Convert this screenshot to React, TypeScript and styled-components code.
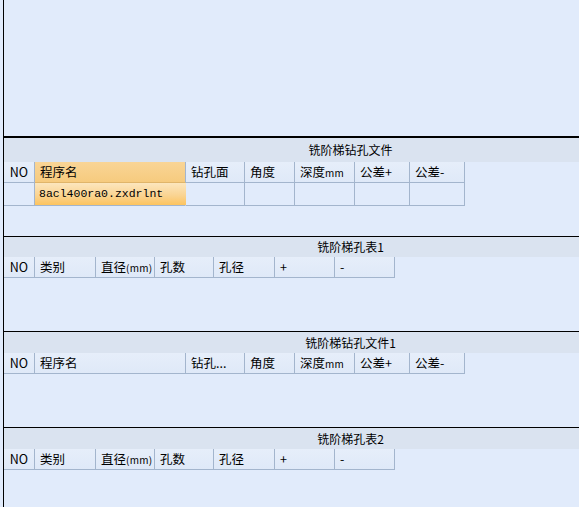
import * as React from "react";
import styled, {createGlobalStyle, css} from "styled-components";

const GlobalStyle = createGlobalStyle`
    html, body {
        margin: 0;
        padding: 0;
        background: #e1ebfb;
        overflow: hidden;
    }
`;

const FONT = `"Noto Sans CJK SC", "Liberation Sans", sans-serif`;

const Frame = styled.div`
    width: 579px;
    height: 507px;
    padding-left: 3px;
    box-sizing: border-box;
    overflow: hidden;
    font-family: ${FONT};
    font-size: 12px;
    color: #000;
`;

const Panel = styled.div`
    height: 100%;
    border-left: 1px solid #000;
    display: flex;
    flex-direction: column;
`;

const TopArea = styled.div`
    height: 136px;
    flex: none;
`;

const Section = styled.section<{$height?: number; $thick?: boolean}>`
    flex: ${(p) => (p.$height ? "none" : "1")};
    height: ${(p) => (p.$height ? `${p.$height}px` : "auto")};
    width: 693px;
    box-sizing: border-box;
    border-top: ${(p) => (p.$thick ? 2 : 1)}px solid #000;
    display: flex;
    flex-direction: column;
`;

const Caption = styled.div<{$height: number}>`
    height: ${(p) => p.$height}px;
    flex: none;
    background: #dae3f0;
    display: flex;
    align-items: center;
    justify-content: center;
    line-height: 1;
`;

const Row = styled.div<{$height: number}>`
    display: flex;
    height: ${(p) => p.$height}px;
    flex: none;
`;

const cellBase = css`
    box-sizing: border-box;
    border-right: 1px solid #a3b5cd;
    border-bottom: 1px solid #a3b5cd;
    display: flex;
    align-items: center;
    padding-left: 5px;
    white-space: nowrap;
    overflow: hidden;
    line-height: 1;
`;

const HeadCell = styled.div<{$width: number; $selected?: boolean; $center?: boolean}>`
    ${cellBase};
    width: ${(p) => p.$width}px;
    justify-content: ${(p) => (p.$center ? "center" : "flex-start")};
    padding-left: ${(p) => (p.$center ? 0 : 5)}px;
    padding-top: 1px;
    font-size: 12.5px;
    background: ${(p) =>
        p.$selected ? "linear-gradient(#f9d596, #f6cb7e)" : "linear-gradient(#e6eefa, #dfe9f8)"};
    border-bottom-color: ${(p) => (p.$selected ? "#e0b56a" : "#a3b5cd")};
`;

const Unit = styled.span`
    font-size: 10px;
    letter-spacing: 0.3px;
`;

const DataCell = styled.div<{$width: number; $selected?: boolean}>`
    ${cellBase};
    width: ${(p) => p.$width}px;
    background: ${(p) =>
        p.$selected ? "linear-gradient(#fce6bd, #fad493 55%, #fdc45f)" : "#e1ebfb"};
    border-right-color: ${(p) => (p.$selected ? "transparent" : "#a3b5cd")};
    font-family: ${(p) => (p.$selected ? `"Liberation Mono", monospace` : FONT)};
    font-size: ${(p) => (p.$selected ? "11.5px" : "12px")};
    padding-left: 4px;
`;

type Col = {title: string; width: number; unit?: string};

const fileCols: Col[] = [
    {title: "NO", width: 31},
    {title: "程序名", width: 151},
    {title: "钻孔面", width: 59},
    {title: "角度", width: 50},
    {title: "深度", unit: "mm", width: 60},
    {title: "公差+", width: 55},
    {title: "公差-", width: 55},
];

const file1Cols: Col[] = fileCols.map((c) => (c.title === "钻孔面" ? {...c, title: "钻孔..."} : c));

const holeCols: Col[] = [
    {title: "NO", width: 31},
    {title: "类别", width: 61},
    {title: "直径", unit: "(mm)", width: 59},
    {title: "孔数", width: 59},
    {title: "孔径", width: 61},
    {title: "+", width: 60},
    {title: "-", width: 60},
];

const HeaderRow = ({cols, selected}: {cols: Col[]; selected?: number}) => (
    <Row $height={21}>
        {cols.map((c, i) => (
            <HeadCell key={c.title} $width={c.width} $selected={i === selected} $center={i === 0}>
                {c.title}
                {c.unit && <Unit>{c.unit}</Unit>}
            </HeadCell>
        ))}
    </Row>
);

export default function App() {
    return (
        <>
            <GlobalStyle />
            <Frame>
                <Panel>
                    <TopArea />

                    <Section $height={100} $thick>
                        <Caption $height={24}>铣阶梯钻孔文件</Caption>
                        <HeaderRow cols={fileCols} selected={1} />
                        <Row $height={23}>
                            {fileCols.map((c, i) => (
                                <DataCell key={c.title} $width={c.width} $selected={i === 1}>
                                    {i === 1 ? "8acl400ra0.zxdrlnt" : ""}
                                </DataCell>
                            ))}
                        </Row>
                    </Section>

                    <Section $height={95}>
                        <Caption $height={20}>铣阶梯孔表1</Caption>
                        <HeaderRow cols={holeCols} />
                    </Section>

                    <Section $height={96}>
                        <Caption $height={21}>铣阶梯钻孔文件1</Caption>
                        <HeaderRow cols={file1Cols} />
                    </Section>

                    <Section>
                        <Caption $height={21}>铣阶梯孔表2</Caption>
                        <HeaderRow cols={holeCols} />
                    </Section>
                </Panel>
            </Frame>
        </>
    );
}
